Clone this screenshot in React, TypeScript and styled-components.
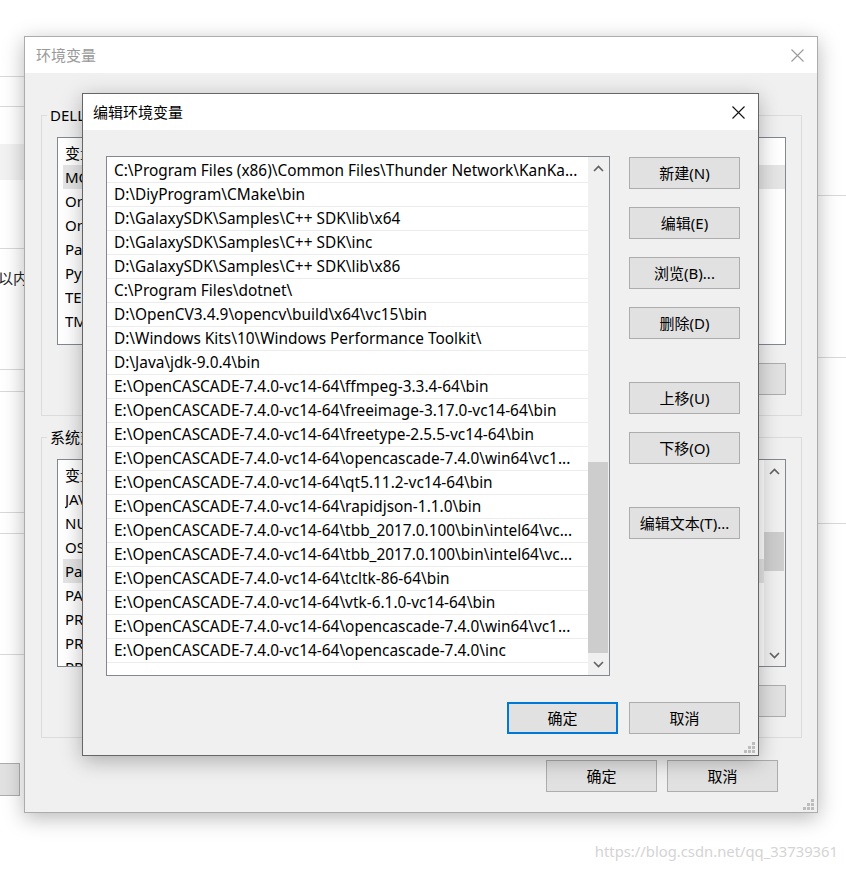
import styled, { createGlobalStyle } from "styled-components";

const GlobalStyle = createGlobalStyle`
  html, body { margin: 0; padding: 0; background: #ffffff; }
  body {
    font-family: "Noto Sans", "Noto Sans CJK SC", sans-serif;
    font-size: 15px;
    color: #000;
  }
  * { box-sizing: border-box; }
`;

// ---- page behind the dialogs ----

const Desktop = styled.div`
  position: relative;
  width: 846px;
  height: 869px;
  overflow: hidden;
  background: #ffffff;
  display: flex;
  justify-content: space-between;
`;

const Strip = styled.div<{ $w: number }>`
  width: ${(p) => p.$w}px;
  display: flex;
  flex-direction: column;
  overflow: hidden;
`;

const Rule = styled.div<{ $gap: number }>`
  margin-top: ${(p) => p.$gap}px;
  border-top: 1px solid #d9d9d9;
`;

const Band = styled.div<{ $gap: number; $h: number }>`
  margin-top: ${(p) => p.$gap}px;
  height: ${(p) => p.$h}px;
  background: #f2f2f2;
`;

const StripCaption = styled.div`
  margin-top: 20px;
  margin-left: -2px;
  line-height: 18px;
  white-space: nowrap;
  color: #222;
`;

const StripButton = styled.div<{ $gap: number }>`
  margin-top: ${(p) => p.$gap}px;
  width: 20px;
  height: 33px;
  background: #e1e1e1;
  border: 1px solid #adadad;
  border-left: none;
`;

const Watermark = styled.div`
  position: absolute;
  right: 8px;
  top: 842px;
  line-height: 18px;
  font-family: "Noto Sans", sans-serif;
  font-size: 14.8px;
  color: #d4d4d4;
`;

// ---- window chrome ----

const Window = styled.section<{ $x: number; $y: number; $w: number; $h: number; $active?: boolean }>`
  position: absolute;
  left: ${(p) => p.$x}px;
  top: ${(p) => p.$y}px;
  width: ${(p) => p.$w}px;
  height: ${(p) => p.$h}px;
  background: #f0f0f0;
  border: 1px solid ${(p) => (p.$active ? "#666666" : "#acacac")};
  box-shadow: 0 5px 20px rgba(0, 0, 0, 0.28);
  display: flex;
  flex-direction: column;
`;

const TitleBar = styled.header<{ $active?: boolean }>`
  height: 36px;
  flex: none;
  background: #ffffff;
  display: flex;
  align-items: center;
  padding-left: ${(p) => (p.$active ? 10 : 11)}px;
  color: ${(p) => (p.$active ? "#000000" : "#999999")};
`;

const Title = styled.span`
  flex: 1;
  line-height: 20px;
`;

const CloseButton = styled.div`
  width: 40px;
  height: 36px;
  display: flex;
  align-items: center;
  justify-content: center;
`;

const Grip = styled.svg`
  position: absolute;
  right: 2px;
  bottom: 1px;
`;

const PushButton = styled.div<{ $primary?: boolean; $w?: number }>`
  width: ${(p) => p.$w ?? 111}px;
  height: 32px;
  flex: none;
  display: flex;
  align-items: center;
  justify-content: center;
  background: #e1e1e1;
  border: ${(p) => (p.$primary ? "2px solid #0078d7" : "1px solid #adadad")};
  line-height: 20px;
  white-space: nowrap;
`;

const ButtonRow = styled.div<{ $padRight?: number; $gap: number }>`
  display: flex;
  justify-content: flex-end;
  gap: ${(p) => p.$gap}px;
  padding-right: ${(p) => p.$padRight ?? 0}px;
`;

// ---- scroll bar ----

const ScrollBar = styled.div`
  width: 21px;
  flex: none;
  background: #f0f0f0;
  display: flex;
  flex-direction: column;
`;

const ScrollArrow = styled.div`
  height: 22px;
  flex: none;
  display: flex;
  align-items: center;
  justify-content: center;
`;

const ScrollTrack = styled.div<{ $offset: number }>`
  flex: 1;
  padding-top: ${(p) => p.$offset}px;
`;

const ScrollThumb = styled.div<{ $size: number }>`
  height: ${(p) => p.$size}px;
  margin-right: 1px;
  background: #cdcdcd;
`;

// ---- 环境变量 dialog ----

const EnvBody = styled.div`
  flex: 1;
  display: flex;
  flex-direction: column;
  gap: 11px;
  padding: 32px 15px 19px 16px;
`;

const GroupBox = styled.fieldset`
  margin: 0;
  min-width: 0;
  border: 1px solid #dcdcdc;
  padding: 12px 15px 20px 15px;
  display: flex;
  flex-direction: column;
  gap: 18px;
`;

const GroupLegend = styled.legend`
  margin-left: -10px;
  padding: 0 3px;
  line-height: 20px;
`;

const VarList = styled.div`
  height: 208px;
  background: #ffffff;
  border: 1px solid #828790;
  display: flex;
  overflow: hidden;
`;

const VarRows = styled.div`
  flex: 1;
  display: flex;
  flex-direction: column;
`;

const VarRow = styled.div<{ $head?: boolean; $selected?: boolean }>`
  height: ${(p) => (p.$head ? 27 : 24)}px;
  flex: none;
  padding-top: ${(p) => (p.$head ? 3 : 0)}px;
  margin-left: 5px;
  padding-left: 2px;
  display: flex;
  line-height: 24px;
  white-space: nowrap;
  background: ${(p) => (p.$selected ? "#e5e5e5" : "transparent")};
`;

const VarName = styled.span`
  width: 240px;
  overflow: hidden;
`;

const VarValue = styled.span`
  flex: 1;
  overflow: hidden;
`;

const EnvFooter = styled(ButtonRow)`
  margin-top: 11px;
`;

// ---- 编辑环境变量 dialog ----

const EditBody = styled.div`
  flex: 1;
  display: grid;
  grid-template-columns: 504px 111px;
  grid-template-rows: 520px 32px;
  column-gap: 19px;
  row-gap: 26px;
  padding: 26px 18px 21px 23px;
`;

const PathList = styled.div`
  border: 1px solid #828790;
  background: #ffffff;
  display: flex;
  overflow: hidden;
`;

const PathRows = styled.div`
  flex: 1;
  padding-top: 2px;
  display: flex;
  flex-direction: column;
`;

const PathRow = styled.div`
  height: 24px;
  flex: none;
  padding-left: 7px;
  line-height: 23px;
  font-size: 15.4px;
  border-bottom: 1px solid #ececec;
  white-space: nowrap;
  overflow: hidden;
`;

const SideButtons = styled.div`
  display: flex;
  flex-direction: column;
  gap: 43px;
  padding-top: 1px;
`;

const SideGroup = styled.div`
  display: flex;
  flex-direction: column;
  gap: 18px;
`;

const EditFooter = styled(ButtonRow)`
  grid-column: 1 / span 2;
`;

// ---- drawings ----

const Chevron = ({ up }: { up?: boolean }) => (
  <svg width="11" height="7" viewBox="0 0 11 7">
    <path
      d={up ? "M1 6 L5.5 1.5 L10 6" : "M1 1 L5.5 5.5 L10 1"}
      fill="none"
      stroke="#606060"
      strokeWidth="1.6"
    />
  </svg>
);

const CloseIcon = ({ color }: { color: string }) => (
  <svg width="13" height="13" viewBox="0 0 13 13">
    <path d="M0.5 0.5 L12.5 12.5 M12.5 0.5 L0.5 12.5" stroke={color} strokeWidth="1.1" />
  </svg>
);

const ResizeGrip = () => (
  <Grip width="12" height="12" viewBox="0 0 12 12">
    {[
      [8, 0],
      [4, 4],
      [8, 4],
      [0, 8],
      [4, 8],
      [8, 8],
    ].map(([x, y]) => (
      <rect key={`${x}-${y}`} x={x} y={y} width="3" height="3" fill="#bdbdbd" />
    ))}
  </Grip>
);

const userVars = [
  ["MOZ_PLUGIN_PATH", "C:\\Program Files (x86)\\Foxit Software\\plugins\\"],
  ["OneDrive", "C:\\Users\\DELL\\OneDrive"],
  ["OneDriveConsumer", "C:\\Users\\DELL\\OneDrive"],
  ["Path", "C:\\Users\\DELL\\AppData\\Local\\Microsoft\\WindowsApps;"],
  ["PyCharm Community Edition", "D:\\PyCharm\\bin;"],
  ["TEMP", "C:\\Users\\DELL\\AppData\\Local\\Temp"],
  ["TMP", "C:\\Users\\DELL\\AppData\\Local\\Temp"],
];

const systemVars = [
  ["JAVA_HOME", "D:\\Java\\jdk-9.0.4"],
  ["NUMBER_OF_PROCESSORS", "8"],
  ["OS", "Windows_NT"],
  ["Path", "C:\\Program Files (x86)\\Common Files\\Thunder Network\\..."],
  ["PATHEXT", ".COM;.EXE;.BAT;.CMD;.VBS;.VBE;.JS;.JSE;.WSF;.WSH;.MSC"],
  ["PROCESSOR_ARCHITECTURE", "AMD64"],
  ["PROCESSOR_IDENTIFIER", "Intel64 Family 6 Model 158 Stepping 10"],
  ["PROCESSOR_LEVEL", "6"],
];

const paths = [
  "C:\\Program Files (x86)\\Common Files\\Thunder Network\\KanKa...",
  "D:\\DiyProgram\\CMake\\bin",
  "D:\\GalaxySDK\\Samples\\C++ SDK\\lib\\x64",
  "D:\\GalaxySDK\\Samples\\C++ SDK\\inc",
  "D:\\GalaxySDK\\Samples\\C++ SDK\\lib\\x86",
  "C:\\Program Files\\dotnet\\",
  "D:\\OpenCV3.4.9\\opencv\\build\\x64\\vc15\\bin",
  "D:\\Windows Kits\\10\\Windows Performance Toolkit\\",
  "D:\\Java\\jdk-9.0.4\\bin",
  "E:\\OpenCASCADE-7.4.0-vc14-64\\ffmpeg-3.3.4-64\\bin",
  "E:\\OpenCASCADE-7.4.0-vc14-64\\freeimage-3.17.0-vc14-64\\bin",
  "E:\\OpenCASCADE-7.4.0-vc14-64\\freetype-2.5.5-vc14-64\\bin",
  "E:\\OpenCASCADE-7.4.0-vc14-64\\opencascade-7.4.0\\win64\\vc1...",
  "E:\\OpenCASCADE-7.4.0-vc14-64\\qt5.11.2-vc14-64\\bin",
  "E:\\OpenCASCADE-7.4.0-vc14-64\\rapidjson-1.1.0\\bin",
  "E:\\OpenCASCADE-7.4.0-vc14-64\\tbb_2017.0.100\\bin\\intel64\\vc...",
  "E:\\OpenCASCADE-7.4.0-vc14-64\\tbb_2017.0.100\\bin\\intel64\\vc...",
  "E:\\OpenCASCADE-7.4.0-vc14-64\\tcltk-86-64\\bin",
  "E:\\OpenCASCADE-7.4.0-vc14-64\\vtk-6.1.0-vc14-64\\bin",
  "E:\\OpenCASCADE-7.4.0-vc14-64\\opencascade-7.4.0\\win64\\vc1...",
  "E:\\OpenCASCADE-7.4.0-vc14-64\\opencascade-7.4.0\\inc",
];

const VariableList = ({
  rows,
  selected,
  scroll,
}: {
  rows: string[][];
  selected: number;
  scroll?: boolean;
}) => (
  <VarList>
    <VarRows>
      <VarRow $head>
        <VarName>变量</VarName>
        <VarValue>值</VarValue>
      </VarRow>
      {rows.map(([name, value], i) => (
        <VarRow key={name + i} $selected={i === selected}>
          <VarName>{name}</VarName>
          <VarValue>{value}</VarValue>
        </VarRow>
      ))}
    </VarRows>
    {scroll && (
      <ScrollBar>
        <ScrollArrow>
          <Chevron up />
        </ScrollArrow>
        <ScrollTrack $offset={50}>
          <ScrollThumb $size={39} />
        </ScrollTrack>
        <ScrollArrow>
          <Chevron />
        </ScrollArrow>
      </ScrollBar>
    )}
  </VarList>
);

const EnvironmentDialog = () => (
  <Window $x={24} $y={36} $w={794} $h={777}>
    <TitleBar>
      <Title>环境变量</Title>
      <CloseButton>
        <CloseIcon color="#9a9a9a" />
      </CloseButton>
    </TitleBar>
    <EnvBody>
      <GroupBox>
        <GroupLegend>DELL 的用户变量(U)</GroupLegend>
        <VariableList rows={userVars} selected={0} />
        <ButtonRow $gap={11}>
          <PushButton $w={110}>新建(N)...</PushButton>
          <PushButton $w={110}>编辑(E)...</PushButton>
          <PushButton $w={110}>删除(D)</PushButton>
        </ButtonRow>
      </GroupBox>
      <GroupBox>
        <GroupLegend>系统变量(S)</GroupLegend>
        <VariableList rows={systemVars} selected={3} scroll />
        <ButtonRow $gap={11}>
          <PushButton $w={110}>新建(W)...</PushButton>
          <PushButton $w={110}>编辑(I)...</PushButton>
          <PushButton $w={110}>删除(L)</PushButton>
        </ButtonRow>
      </GroupBox>
      <EnvFooter $gap={10} $padRight={24}>
        <PushButton>确定</PushButton>
        <PushButton>取消</PushButton>
      </EnvFooter>
    </EnvBody>
    <ResizeGrip />
  </Window>
);

const EditDialog = () => (
  <Window $x={82} $y={93} $w={677} $h={663} $active>
    <TitleBar $active>
      <Title>编辑环境变量</Title>
      <CloseButton>
        <CloseIcon color="#111111" />
      </CloseButton>
    </TitleBar>
    <EditBody>
      <PathList>
        <PathRows>
          {paths.map((p, i) => (
            <PathRow key={i}>{p}</PathRow>
          ))}
        </PathRows>
        <ScrollBar>
          <ScrollArrow>
            <Chevron up />
          </ScrollArrow>
          <ScrollTrack $offset={283}>
            <ScrollThumb $size={191} />
          </ScrollTrack>
          <ScrollArrow>
            <Chevron />
          </ScrollArrow>
        </ScrollBar>
      </PathList>
      <SideButtons>
        <SideGroup>
          <PushButton>新建(N)</PushButton>
          <PushButton>编辑(E)</PushButton>
          <PushButton>浏览(B)...</PushButton>
          <PushButton>删除(D)</PushButton>
        </SideGroup>
        <SideGroup>
          <PushButton>上移(U)</PushButton>
          <PushButton>下移(O)</PushButton>
        </SideGroup>
        <SideGroup>
          <PushButton>编辑文本(T)...</PushButton>
        </SideGroup>
      </SideButtons>
      <EditFooter $gap={11}>
        <PushButton $primary>确定</PushButton>
        <PushButton>取消</PushButton>
      </EditFooter>
    </EditBody>
    <ResizeGrip />
  </Window>
);

export default function App() {
  return (
    <>
      <GlobalStyle />
      <Desktop>
        <Strip $w={24}>
          <Rule $gap={76} />
          <Rule $gap={29} />
          <Band $gap={37} $h={36} />
          <Rule $gap={68} />
          <StripCaption>以内容</StripCaption>
          <Rule $gap={82} />
          <Rule $gap={21} />
          <Rule $gap={120} />
          <Rule $gap={20} />
          <Rule $gap={120} />
          <StripButton $gap={108} />
        </Strip>
        <Strip $w={28}>
          <Rule $gap={195} />
          <Rule $gap={161} />
          <Rule $gap={165} />
        </Strip>
        <EnvironmentDialog />
        <EditDialog />
        <Watermark>https://blog.csdn.net/qq_33739361</Watermark>
      </Desktop>
    </>
  );
}
